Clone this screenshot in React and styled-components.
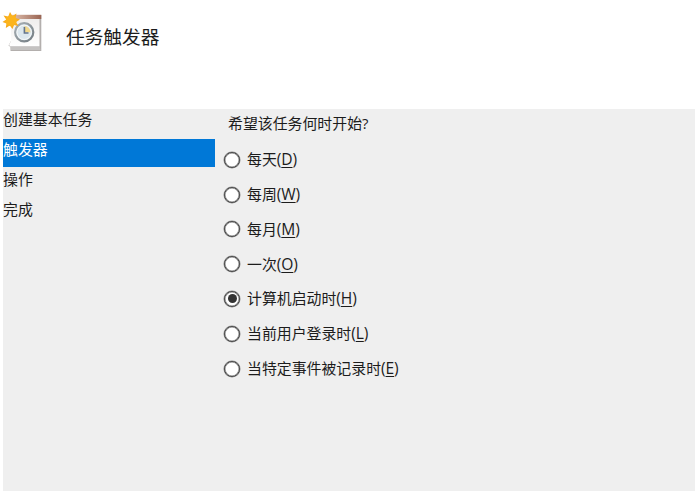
import styled, { createGlobalStyle } from 'styled-components'

const GlobalStyle = createGlobalStyle`
  * {
    box-sizing: border-box;
  }

  body {
    margin: 0;
    background: #ffffff;
    overflow: hidden;
  }
`

const Wizard = styled.div`
  display: flex;
  flex-direction: column;
  height: 491px;
  color: #1c1c1c;
  font-family: "Open Sans", "Noto Sans CJK SC", sans-serif;
  font-size: 14.9px;
  line-height: 22px;
`

const Header = styled.header`
  display: flex;
  align-items: flex-start;
  gap: 22px;
  height: 109px;
  padding: 10px 0 0 2px;
`

const TaskIcon = styled.svg`
  display: block;
  width: 42px;
  height: 44px;
`

const Title = styled.h1`
  margin: 12px 0 0;
  font-size: 18.7px;
  font-weight: 400;
  line-height: 30px;
`

const Body = styled.div`
  display: flex;
  flex: 1;
  margin-left: 3px;
  background: #efefef;
`

const Steps = styled.ul`
  width: 212px;
  margin: 0;
  padding: 0;
  list-style: none;
`

const Step = styled.li`
  height: 28px;
  margin-bottom: 2px;
  line-height: 20px;
  white-space: nowrap;
  color: ${({ $active }) => ($active ? '#ffffff' : 'inherit')};
  background: ${({ $active }) => ($active ? '#0078d7' : 'transparent')};
`

const Content = styled.main`
  padding: 3px 0 0 9px;
`

const Question = styled.p`
  margin: 0 0 8.4px 4px;
  line-height: 22px;
`

const Option = styled.label`
  display: flex;
  align-items: center;
  gap: 7px;
  height: 34.8px;
  white-space: nowrap;
`

const Radio = styled.input`
  appearance: none;
  display: grid;
  place-items: center;
  width: 16px;
  height: 16px;
  margin: 0;
  border: 1px solid #484848;
  border-radius: 50%;
  background: #ffffff;
  box-shadow: 0 0 0 0.5px #8a8a8a, inset 0 0 0 0.5px #8a8a8a;

  &:checked::before {
    content: "";
    width: 9px;
    height: 9px;
    border-radius: 50%;
    background: #333333;
  }
`

const OptionText = styled.span`
  margin-top: -1px;
`

const Hotkey = styled.span`
  font-size: 15.6px;
  letter-spacing: -0.1px;
`

const Key = styled.span`
  text-decoration: underline;
  text-decoration-thickness: 1px;
  text-underline-offset: 2px;
  text-decoration-skip-ink: none;
`

const steps = ['创建基本任务', '触发器', '操作', '完成']

const triggers = [
  { label: '每天', hotkey: 'D' },
  { label: '每周', hotkey: 'W' },
  { label: '每月', hotkey: 'M' },
  { label: '一次', hotkey: 'O' },
  { label: '计算机启动时', hotkey: 'H' },
  { label: '当前用户登录时', hotkey: 'L' },
  { label: '当特定事件被记录时', hotkey: 'E' },
]

function NewTaskIcon() {
  return (
    <TaskIcon viewBox="0 0 42 44">
      <defs>
        <linearGradient id="page" x1="0" y1="0" x2="0" y2="1">
          <stop offset="0" stopColor="#efedec" />
          <stop offset="1" stopColor="#ffffff" />
        </linearGradient>
        <linearGradient id="top" x1="0" y1="0" x2="1" y2="0">
          <stop offset="0" stopColor="#dfbfae" />
          <stop offset="1" stopColor="#9a6553" />
        </linearGradient>
        <linearGradient id="rim" x1="0" y1="0" x2="1" y2="1">
          <stop offset="0" stopColor="#a9b1b6" />
          <stop offset="1" stopColor="#737c82" />
        </linearGradient>
        <radialGradient id="sun">
          <stop offset="0" stopColor="#ffc62e" />
          <stop offset="1" stopColor="#f5a314" />
        </radialGradient>
      </defs>
      {/* calendar */}
      <path d="M9 5H39.3V41H8.5V37L6.5 35.5L9 31Z" fill="#b3afad" />
      <path d="M9 9H37.5V36.5H8.5L7 35L9 31Z" fill="url(#page)" />
      <path d="M8.5 36.5H37.5L38.5 40H9Z" fill="#c4c2c1" />
      <path d="M10 4.8H39.3V9H10Z" fill="url(#top)" />
      {/* clock */}
      <circle cx="22.2" cy="22.3" r="9.1" fill="#dce7ee" stroke="url(#rim)" strokeWidth="2.2" />
      <circle cx="22.2" cy="22.3" r="7.2" fill="none" stroke="#f6f8f9" strokeWidth="1" />
      <path d="M22.4 22.3V16A6.2 6.2 0 0 1 28.4 22.3Z" fill="#f2d88c" />
      <path d="M22.4 17V23H26.5" fill="none" stroke="#64758c" strokeWidth="1.6" />
      {/* new item sun */}
      <path
        d="M8 2L10.4 6L14.5 3.6L13.6 8.1L18 9.5L14 12L16.4 16L12 15L10.5 19L7.8 15.4L3.8 18L4.4 13.4L0.5 12L4.2 9.5L1.5 5.5L6.2 6.4Z"
        fill="url(#sun)"
      />
      <circle cx="9.2" cy="10.7" r="5.4" fill="#fcb41c" />
    </TaskIcon>
  )
}

function App() {
  return (
    <Wizard>
      <GlobalStyle />
      <Header>
        <NewTaskIcon />
        <Title>任务触发器</Title>
      </Header>
      <Body>
        <Steps>
          {steps.map((step) => (
            <Step key={step} $active={step === '触发器'}>{step}</Step>
          ))}
        </Steps>
        <Content>
          <Question>希望该任务何时开始?</Question>
          {triggers.map(({ label, hotkey }) => (
            <Option key={hotkey}>
              <Radio type="radio" name="trigger" defaultChecked={hotkey === 'H'} />
              <OptionText>
                {label}
                <Hotkey>(<Key>{hotkey}</Key>)</Hotkey>
              </OptionText>
            </Option>
          ))}
        </Content>
      </Body>
    </Wizard>
  )
}

export default App
